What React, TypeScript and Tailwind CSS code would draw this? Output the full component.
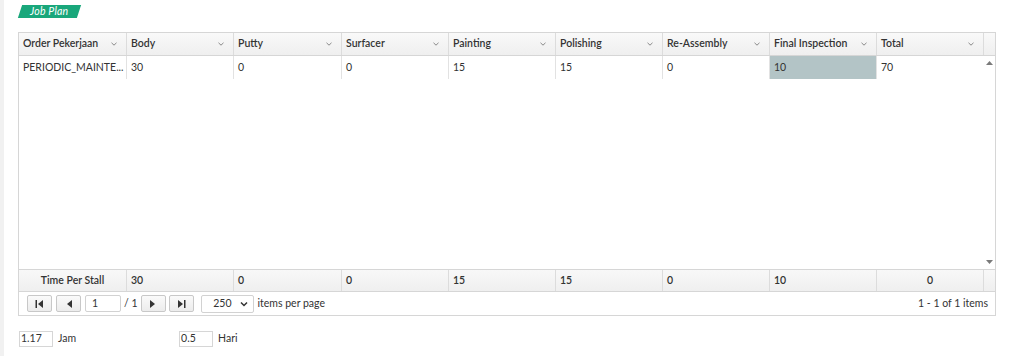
import React from "react";

const cols = ["Order Pekerjaan", "Body", "Putty", "Surfacer", "Painting", "Polishing", "Re-Assembly", "Final Inspection", "Total"];
const row = ["PERIODIC_MAINTE...", "30", "0", "0", "15", "15", "0", "10", "70"];
const foot = ["30", "0", "0", "15", "15", "0", "10"];

function Chev() {
  return (
    <svg width="8" height="6" viewBox="0 0 8 6" className="shrink-0">
      <path d="M1.5 1.8 L4 4.2 L6.5 1.8" fill="none" stroke="#888" strokeWidth="1" />
    </svg>
  );
}

function PagerBtn({ children }: { children: React.ReactNode }) {
  return (
    <div className="w-[25px] h-[17px] border border-[#c8c8c8] rounded-[2px] bg-gradient-to-b from-[#fafafa] to-[#ececec] flex items-center justify-center">
      {children}
    </div>
  );
}

export default function App() {
  return (
    <div className="flex w-[1024px] h-[356px] bg-white text-[#333] text-[10.5px]" style={{ fontFamily: "Lato, 'Noto Sans', sans-serif" }}>
      <div className="w-[4px] bg-[#f1f1f1] shrink-0" />
      <div className="flex flex-col pl-[14px] pt-[5px]">
        <div className="ml-[2px] w-[59px] h-[13px] bg-[#19a77b] -skew-x-[18deg] flex items-center justify-center">
          <span className="skew-x-[18deg] italic text-white text-[10.5px] leading-none tracking-[0.2px]">Job Plan</span>
        </div>
        <div className="mt-[14px] w-[978px] border border-[#d6d6d6] flex flex-col">
          {/* header */}
          <div className="grid grid-cols-[107px_107px_108px_107px_107px_107px_107px_107px_107px_1fr] h-[23px] bg-gradient-to-b from-[#f9f9f9] to-[#efefef] border-b border-[#d6d6d6]">
            {cols.map((c, i) => (
              <div key={c} className={`flex items-center justify-between pl-[4px] pr-[8px] font-semibold ${i > 0 ? "border-l border-[#dcdcdc]" : ""}`}>
                <span>{c}</span>
                <Chev />
              </div>
            ))}
            <div className="border-l border-[#dcdcdc]" />
          </div>
          {/* body */}
          <div className="flex h-[213px]">
            <div className="flex-1">
              <div className="grid grid-cols-[107px_107px_108px_107px_107px_107px_107px_107px_107px] h-[23px]">
                {row.map((c, i) => (
                  <div key={i} className={`flex items-center pl-[4px] ${i > 0 ? "border-l border-[#e2e2e2]" : ""} ${i === 7 ? "bg-[#b3c4c6]" : ""}`}>
                    {c}
                  </div>
                ))}
              </div>
            </div>
            <div className="w-[12px] flex flex-col justify-between items-center py-[5px]">
              <svg width="7" height="4" viewBox="0 0 7 4"><path d="M0 4 L3.5 0 L7 4 Z" fill="#7a7a7a" /></svg>
              <svg width="7" height="4" viewBox="0 0 7 4"><path d="M0 0 L3.5 4 L7 0 Z" fill="#7a7a7a" /></svg>
            </div>
          </div>
          {/* footer */}
          <div className="grid grid-cols-[107px_107px_108px_107px_107px_107px_107px_107px_107px_1fr] h-[23px] bg-gradient-to-b from-[#f8f8f8] to-[#efefef] border-t border-b border-[#d6d6d6] font-semibold">
            <div className="flex items-center justify-center">Time Per Stall</div>
            {foot.map((c, i) => (
              <div key={i} className="flex items-center pl-[4px] border-l border-[#dcdcdc]">{c}</div>
            ))}
            <div className="flex items-center justify-center border-l border-[#dcdcdc]">0</div>
            <div className="border-l border-[#dcdcdc]" />
          </div>
          {/* pager */}
          <div className="h-[23px] flex items-center pl-[8px] pr-[7px]">
            <div className="flex items-center gap-[4px]">
              <PagerBtn>
                <svg width="9" height="8" viewBox="0 0 9 8"><rect x="0.5" y="0" width="1.5" height="8" fill="#333" /><path d="M8 0 L3 4 L8 8 Z" fill="#333" /></svg>
              </PagerBtn>
              <PagerBtn>
                <svg width="6" height="8" viewBox="0 0 6 8"><path d="M6 0 L1 4 L6 8 Z" fill="#333" /></svg>
              </PagerBtn>
              <div className="w-[36px] h-[17px] border border-[#d2d2d2] rounded-[2px] flex items-center pl-[6px]">1</div>
            </div>
            <span className="ml-[3px] mr-[3px]">/ 1</span>
            <div className="flex items-center gap-[3px]">
              <PagerBtn>
                <svg width="6" height="8" viewBox="0 0 6 8"><path d="M0 0 L5 4 L0 8 Z" fill="#333" /></svg>
              </PagerBtn>
              <PagerBtn>
                <svg width="9" height="8" viewBox="0 0 9 8"><path d="M1 0 L6 4 L1 8 Z" fill="#333" /><rect x="7" y="0" width="1.5" height="8" fill="#333" /></svg>
              </PagerBtn>
            </div>
            <div className="ml-[7px] w-[53px] h-[18px] border border-[#d2d2d2] rounded-[2px] flex items-center justify-end pr-[5px] gap-[8px]">
              <span>250</span>
              <svg width="8" height="6" viewBox="0 0 8 6"><path d="M1 1.5 L4 4.5 L7 1.5" fill="none" stroke="#333" strokeWidth="1.5" /></svg>
            </div>
            <span className="ml-[4px]">items per page</span>
            <span className="ml-auto">1 - 1 of 1 items</span>
          </div>
        </div>
        <div className="mt-[15px] flex items-center">
          <div className="w-[34px] h-[16px] border border-[#d6d6d6] flex items-center pl-[1px] ml-[1px]">1.17</div>
          <span className="ml-[5px]">Jam</span>
          <div className="ml-[103px] w-[34px] h-[16px] border border-[#d6d6d6] flex items-center pl-[1px]">0.5</div>
          <span className="ml-[5px]">Hari</span>
        </div>
      </div>
    </div>
  );
}
